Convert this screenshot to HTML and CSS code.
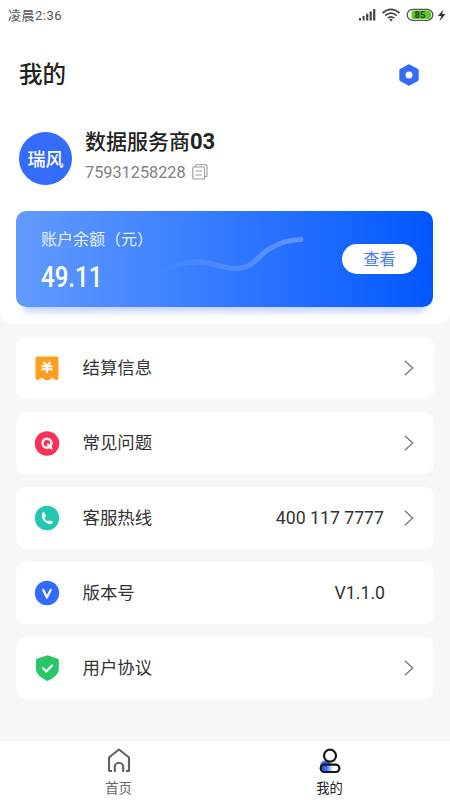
FILE: index.html
```html
<!DOCTYPE html>
<html lang="zh-CN">
<head>
<meta charset="utf-8">
<title>我的</title>
<link rel="stylesheet" href="styles.css">
</head>
<body>
<div class="app">
  <section class="top">
    <div class="status">
      <span class="time">凌晨2:36</span>
      <svg class="status-icons" width="90" height="16" viewBox="0 0 90 16">
        <g fill="#444"><rect x="0" y="11" width="2" height="2.5"/><rect x="3.600" y="9" width="2" height="4.5"/><rect x="7.100" y="6.700" width="2.200" height="6.800"/><rect x="10.600" y="4.500" width="2.200" height="9"/><rect x="14.100" y="2" width="2.200" height="11.500"/></g>
        <g fill="none" stroke="#444" stroke-width="1.700"><path d="M23.500 6Q32 -1.200 40.500 6"/><path d="M26.200 8.700Q32 3.700 37.800 8.700"/><path d="M28.800 11.200Q32 8.400 35.200 11.200"/></g>
        <path d="M30.300 12.400Q32 11.200 33.700 12.400L32 14.400Z" fill="#444"/>
        <rect x="48.200" y="2.500" width="25.600" height="10.800" rx="5.400" fill="#fff" stroke="#555" stroke-width="1.300"/>
        <path d="M54.500 3.800H70a2.500 4.200 0 0 1 0 8.300H54.500a2 2 0 0 1-2-2V5.800a2 2 0 0 1 2-2Z" fill="#58ce18"/>
        <text x="61" y="11.400" class="battery">85</text>
        <path d="M84.500 2.500L78.800 9H82.300L80.300 14.500L86.500 7H83Z" fill="#333"/>
      </svg>
    </div>
    <header class="header">
      <h1>我的</h1>
      <svg width="22" height="24" viewBox="0 0 22 24"><path d="M11 2.800L19.200 7.400V16.600L11 21.200L2.800 16.600V7.400Z" fill="#356bfb" stroke="#356bfb" stroke-width="3" stroke-linejoin="round"/><circle cx="11" cy="12" r="3.500" fill="#fff"/></svg>
    </header>
    <div class="profile">
      <div class="avatar">瑞风</div>
      <div class="identity">
        <h2>数据服务商<b>03</b></h2>
        <div class="phone"><span>75931258228</span>
          <svg width="16" height="16" viewBox="0 0 16 16" fill="none" stroke="#999" stroke-width="1.100"><path d="M3.500 3V1.800Q3.500 .800 4.500 .800H14Q15 .800 15 1.800V11.500Q15 12.500 14 12.500H12.500"/><rect x=".800" y="3" width="11.700" height="12" rx="1"/><path d="M3.300 7H10M3.300 11H10"/></svg>
        </div>
      </div>
    </div>
    <div class="balance">
      <svg class="curve" width="150" height="50" viewBox="0 0 150 50">
        <defs><linearGradient id="fade"><stop stop-color="#fff" stop-opacity="0"/><stop offset=".3" stop-color="#fff" stop-opacity=".09"/><stop offset="1" stop-color="#fff" stop-opacity=".27"/></linearGradient></defs>
        <path d="M2 42C16 35 24 31 39 31C55 31 65 37.500 77 37.500C92 37.500 97 30 104 23.500C114 14.500 127 9 143 8.500" fill="none" stroke="url(#fade)" stroke-width="5" stroke-linecap="round"/>
      </svg>
      <div class="amount">
        <div class="label">账户余额（元）</div>
        <div class="value">49.11</div>
      </div>
      <div class="view">查看</div>
    </div>
  </section>
  <main class="list">
    <div class="row">
      <svg class="icon" viewBox="0 0 26 26"><path d="M3 1.500H23Q24.500 1.500 24.500 3V24Q22 26.500 19.400 23.300Q18.600 22.200 17.700 23.300Q13 27.500 8.300 23.300Q7.400 22.200 6.600 23.300Q4 26.500 1.500 24V3Q1.500 1.500 3 1.500Z" fill="#ff9f20"/><path d="M10 7.500L13 10.800L16 7.500M8.300 11.200H17.700M8.300 14.300H17.700M13 11V17.300" fill="none" stroke="#fff" stroke-width="2" stroke-linecap="round"/></svg>
      <span class="name">结算信息</span>
      <svg class="arrow" viewBox="0 0 10 16"><path d="M.800 .800L8.700 8L.800 15.200"/></svg>
    </div>
    <div class="row">
      <svg class="icon" viewBox="0 0 26 26"><circle cx="13" cy="13.500" r="12.200" fill="#fb3056"/><circle cx="13" cy="13.200" r="4.500" fill="none" stroke="#fff" stroke-width="2.400"/><path d="M14 14.500L17.500 18.500" stroke="#fff" stroke-width="2.300" stroke-linecap="round"/></svg>
      <span class="name">常见问题</span>
      <svg class="arrow" viewBox="0 0 10 16"><path d="M.800 .800L8.700 8L.800 15.200"/></svg>
    </div>
    <div class="row">
      <svg class="icon" viewBox="0 0 26 26"><circle cx="13" cy="13" r="12.200" fill="#26c6b2"/><path d="M9.300 8.600C7.800 13.500 11.800 18.300 17.200 17.700" fill="none" stroke="#fff" stroke-width="2"/><path d="M9.500 8.800L10.300 11M14.900 17.200L17.200 17.300" stroke="#fff" stroke-width="3" stroke-linecap="round"/></svg>
      <span class="name">客服热线</span>
      <span class="info">400 117 7777</span>
      <svg class="arrow" viewBox="0 0 10 16"><path d="M.800 .800L8.700 8L.800 15.200"/></svg>
    </div>
    <div class="row">
      <svg class="icon" viewBox="0 0 26 26"><circle cx="13" cy="13" r="12.200" fill="#356bfb"/><path d="M9.300 10L12.900 17.500L16.700 10" fill="none" stroke="#fff" stroke-width="2.200" stroke-linecap="round" stroke-linejoin="round"/></svg>
      <span class="name">版本号</span>
      <span class="info version">V1.1.0</span>
    </div>
    <div class="row">
      <svg class="icon" viewBox="0 0 26 26"><path d="M13.500 .300L23.500 3.500Q24.800 4 24.800 5.300V14C24.800 19.500 19 23.500 13.500 26C8 23.500 2 19.500 2 14V5.300Q2 4 3.300 3.500Z" fill="#2cc566"/><path d="M9 13.300L12.300 16.500L18 10.500" fill="none" stroke="#fff" stroke-width="2.200" stroke-linecap="round" stroke-linejoin="round"/></svg>
      <span class="name">用户协议</span>
      <svg class="arrow" viewBox="0 0 10 16"><path d="M.800 .800L8.700 8L.800 15.200"/></svg>
    </div>
  </main>
  <nav class="tabs">
    <div class="tab">
      <svg width="26" height="28" viewBox="0 0 26 28"><path d="M6 24H3.500Q3 24 3 23.500V10.500L13 2.500L23 10.500V23.500Q23 24 22.500 24H20M8.800 25V20A4.200 4.200 0 0 1 17.200 20V25" fill="none" stroke="#606060" stroke-width="2.100" stroke-linejoin="round"/></svg>
      <span>首页</span>
    </div>
    <div class="tab active">
      <svg width="26" height="28" viewBox="0 0 26 28"><defs><linearGradient id="blue"><stop stop-color="#1556f5"/><stop offset=".5" stop-color="#3979ff"/><stop offset="1" stop-color="#3979ff" stop-opacity="0"/></linearGradient></defs><circle cx="8.500" cy="19" r="5.500" fill="#2e6cff"/><rect x="4" y="18" width="18" height="7" rx="3.500" fill="#fff"/><rect x="4" y="18" width="12" height="7" rx="3.500" fill="url(#blue)"/><circle cx="13" cy="8.700" r="6" fill="#fff" stroke="#151515" stroke-width="2.200"/><rect x="3.700" y="17.700" width="18.700" height="7.300" rx="3.650" fill="none" stroke="#151515" stroke-width="2.200"/></svg>
      <span>我的</span>
    </div>
  </nav>
</div>
</body>
</html>
```
FILE: styles.css
```css
* { box-sizing: border-box; }
body {
  margin: 0;
  font-family: Roboto, "Noto Sans CJK SC", sans-serif;
  color: #333;
}
svg { display: block; flex: none; }
h1, h2 { margin: 0; font-weight: 500; color: #222; }
.app {
  width: 450px;
  height: 800px;
  display: flex;
  flex-direction: column;
  background: #f7f7f7;
  overflow: hidden;
}
.top {
  height: 324px;
  background: #fff;
  border-radius: 0 0 12px 12px;
}
.status {
  height: 30px;
  display: flex;
  align-items: center;
  justify-content: space-between;
  padding: 0 1px 0 8px;
}
.time { margin-top: -2px; font-size: 13px; letter-spacing: .5px; color: #555; }
.battery { font: bold 9.500px Roboto, sans-serif; text-anchor: middle; fill: #17400b; }
.header {
  height: 90px;
  padding: 0 30px 0 19px;
  display: flex;
  align-items: center;
  justify-content: space-between;
}
.header h1 { font-size: 23.500px; line-height: 34px; }
.profile {
  height: 91px;
  padding: 12px 19px 0;
  display: flex;
  align-items: flex-start;
}
.avatar {
  width: 53px;
  height: 53px;
  border-radius: 50%;
  background: #356bfb;
  color: #fff;
  font-size: 18px;
  font-weight: 500;
  line-height: 55px;
  text-align: center;
}
.identity { margin: -5px 0 0 13px; }
.identity h2 { font-size: 21px; line-height: 30px; }
.identity b { font-size: 22px; font-weight: 700; }
.phone {
  display: flex;
  align-items: center;
  gap: 6px;
  height: 30px;
  font-size: 16.300px;
  color: #808080;
}
.balance {
  position: relative;
  height: 96px;
  margin: 0 17px 0 16px;
  padding: 0 16px 0 25px;
  display: flex;
  justify-content: space-between;
  border-radius: 10px;
  background: linear-gradient(90deg, #629bff, #2e76ff 55%, #0357ff);
  box-shadow: 0 13px 6px -8px #c6d3ff;
  color: #fff;
}
.curve { position: absolute; left: 142px; top: 20px; }
.amount { padding-top: 17px; }
.label { font-size: 16px; line-height: 24px; color: #e8f0ff; }
.value {
  font-size: 29px;
  font-weight: 500;
  line-height: 34px;
  margin-top: 8px;
  transform: scaleX(.83);
  transform-origin: left;
}
.view {
  width: 75px;
  height: 30px;
  margin-top: 33px;
  border-radius: 15px;
  background: #fff;
  color: #4b78f5;
  font-size: 16px;
  line-height: 31px;
  text-align: center;
}
.list {
  flex: 1;
  padding: 12.500px 16px 0;
  display: flex;
  flex-direction: column;
  gap: 12.500px;
}
.row {
  height: 62.500px;
  padding: 0 20px 0 18px;
  display: flex;
  align-items: center;
  border-radius: 10px;
  background: #fff;
}
.icon { width: 26px; height: 26px; }
.name { flex: 1; margin: -3px 0 0 22.500px; font-size: 17.400px; }
.info { font-size: 17.700px; margin-right: 20px; }
.info.version { margin-right: 29px; }
.arrow { width: 10px; height: 16px; fill: none; stroke: #777; stroke-width: 1.300; }
.tabs {
  height: 60px;
  display: flex;
  padding: 0 15px 0 13px;
  background: #fff;
  border-top: 1px solid #eee;
}
.tab {
  flex: 1;
  display: flex;
  flex-direction: column;
  align-items: center;
  padding-top: 6px;
  font-size: 13.300px;
  line-height: 20px;
  color: #666;
}
.tab span { margin-top: 4px; }
.tab.active { color: #222; }
```
